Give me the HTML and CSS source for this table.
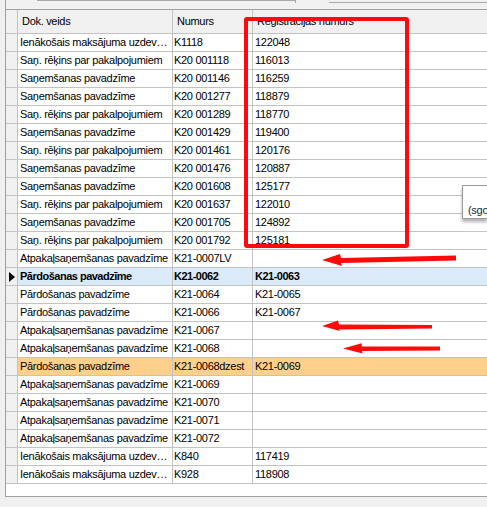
FILE: index.html
```html
<!DOCTYPE html>
<html lang="lv">
<head>
<meta charset="utf-8">
<title>Dokumenti</title>
<link rel="stylesheet" href="styles.css">
</head>
<body>
<div class="screen">
  <div class="topbar"><span class="seg seg-a"></span><span class="seg seg-b"></span></div>
  <div class="grid">
    <div class="row head">
      <div class="cell ind"></div>
      <div class="cell c1">Dok. veids</div>
      <div class="cell c2">Numurs<span class="sort"></span></div>
      <div class="cell c3">Registracijas numurs</div>
    </div>
    <div class="row"><div class="cell ind"></div><div class="cell c1">Ienākošais maksājuma uzdev…</div><div class="cell c2">K1118</div><div class="cell c3">122048</div></div>
    <div class="row"><div class="cell ind"></div><div class="cell c1">Saņ. rēķins par pakalpojumiem</div><div class="cell c2">K20 001118</div><div class="cell c3">116013</div></div>
    <div class="row"><div class="cell ind"></div><div class="cell c1">Saņemšanas pavadzīme</div><div class="cell c2">K20 001146</div><div class="cell c3">116259</div></div>
    <div class="row"><div class="cell ind"></div><div class="cell c1">Saņemšanas pavadzīme</div><div class="cell c2">K20 001277</div><div class="cell c3">118879</div></div>
    <div class="row"><div class="cell ind"></div><div class="cell c1">Saņ. rēķins par pakalpojumiem</div><div class="cell c2">K20 001289</div><div class="cell c3">118770</div></div>
    <div class="row"><div class="cell ind"></div><div class="cell c1">Saņemšanas pavadzīme</div><div class="cell c2">K20 001429</div><div class="cell c3">119400</div></div>
    <div class="row"><div class="cell ind"></div><div class="cell c1">Saņ. rēķins par pakalpojumiem</div><div class="cell c2">K20 001461</div><div class="cell c3">120176</div></div>
    <div class="row"><div class="cell ind"></div><div class="cell c1">Saņemšanas pavadzīme</div><div class="cell c2">K20 001476</div><div class="cell c3">120887</div></div>
    <div class="row"><div class="cell ind"></div><div class="cell c1">Saņemšanas pavadzīme</div><div class="cell c2">K20 001608</div><div class="cell c3">125177</div></div>
    <div class="row"><div class="cell ind"></div><div class="cell c1">Saņ. rēķins par pakalpojumiem</div><div class="cell c2">K20 001637</div><div class="cell c3">122010</div></div>
    <div class="row"><div class="cell ind"></div><div class="cell c1">Saņemšanas pavadzīme</div><div class="cell c2">K20 001705</div><div class="cell c3">124892</div></div>
    <div class="row"><div class="cell ind"></div><div class="cell c1">Saņ. rēķins par pakalpojumiem</div><div class="cell c2">K20 001792</div><div class="cell c3">125181</div></div>
    <div class="row"><div class="cell ind"></div><div class="cell c1">Atpakaļsaņemšanas pavadzīme</div><div class="cell c2">K21-0007LV</div><div class="cell c3"></div></div>
    <div class="row current"><div class="cell ind"><span class="pointer"></span></div><div class="cell c1">Pārdošanas pavadzīme</div><div class="cell c2">K21-0062</div><div class="cell c3">K21-0063</div></div>
    <div class="row"><div class="cell ind"></div><div class="cell c1">Pārdošanas pavadzīme</div><div class="cell c2">K21-0064</div><div class="cell c3">K21-0065</div></div>
    <div class="row"><div class="cell ind"></div><div class="cell c1">Pārdošanas pavadzīme</div><div class="cell c2">K21-0066</div><div class="cell c3">K21-0067</div></div>
    <div class="row"><div class="cell ind"></div><div class="cell c1">Atpakaļsaņemšanas pavadzīme</div><div class="cell c2">K21-0067</div><div class="cell c3"></div></div>
    <div class="row"><div class="cell ind"></div><div class="cell c1">Atpakaļsaņemšanas pavadzīme</div><div class="cell c2">K21-0068</div><div class="cell c3"></div></div>
    <div class="row marked"><div class="cell ind"></div><div class="cell c1">Pārdošanas pavadzīme</div><div class="cell c2">K21-0068dzest</div><div class="cell c3">K21-0069</div></div>
    <div class="row"><div class="cell ind"></div><div class="cell c1">Atpakaļsaņemšanas pavadzīme</div><div class="cell c2">K21-0069</div><div class="cell c3"></div></div>
    <div class="row"><div class="cell ind"></div><div class="cell c1">Atpakaļsaņemšanas pavadzīme</div><div class="cell c2">K21-0070</div><div class="cell c3"></div></div>
    <div class="row"><div class="cell ind"></div><div class="cell c1">Atpakaļsaņemšanas pavadzīme</div><div class="cell c2">K21-0071</div><div class="cell c3"></div></div>
    <div class="row"><div class="cell ind"></div><div class="cell c1">Atpakaļsaņemšanas pavadzīme</div><div class="cell c2">K21-0072</div><div class="cell c3"></div></div>
    <div class="row"><div class="cell ind"></div><div class="cell c1">Ienākošais maksājuma uzdev…</div><div class="cell c2">K840</div><div class="cell c3">117419</div></div>
    <div class="row"><div class="cell ind"></div><div class="cell c1">Ienākošais maksājuma uzdev…</div><div class="cell c2">K928</div><div class="cell c3">118908</div></div>
  </div>

  <div class="highlight-box"></div>

  <svg class="arrows" width="487" height="507" viewBox="0 0 487 507" aria-hidden="true">
    <g fill="#ff0a0a">
      <polygon points="322,260 340,254 341,258 456,255.5 456,260.5 341,263 342,266"/>
      <polygon points="322,326 338,320.5 339,324.5 432,325 432,328.5 339,329.5 340,331"/>
      <polygon points="343,348.5 361.5,343.3 362,346.5 440,346.5 440,350.5 362,351 362.5,353.5"/>
    </g>
  </svg>

  <div class="tooltip">(sgo</div>
</div>
</body>
</html>
```

FILE: styles.css
```css
html, body {
  margin: 0;
  padding: 0;
}

body {
  width: 487px;
  height: 507px;
  overflow: hidden;
  background: #f0f0f0;
  font-family: "Liberation Sans", Arial, sans-serif;
  font-size: 11px;
  letter-spacing: -0.3px;
  color: #000;
}

.screen {
  position: relative;
  width: 487px;
  height: 507px;
  overflow: hidden;
}

.topbar {
  display: flex;
  align-items: flex-start;
  height: 9px;
  margin-left: 5px;
  border-left: 1px solid #a0a0a0;
}

.seg-a {
  display: block;
  margin-left: 31px;
  width: 259px;
  height: 3px;
  box-sizing: border-box;
  border-top: 1px solid #a8a8a8;
  border-right: 1px solid #a8a8a8;
}

.seg-b {
  display: block;
  margin-left: 33px;
  flex: 1;
  height: 2px;
  border-bottom: 1px solid #a8a8a8;
}

.grid {
  margin-left: 5px;
  height: 486px;
  background: #fff;
  border-left: 1px solid #a0a0a0;
  border-top: 1px solid #a0a0a0;
  border-bottom: 1px solid #a0a0a0;
}

.row {
  display: flex;
  height: 18px;
}

.cell {
  box-sizing: border-box;
  height: 100%;
  line-height: 17px;
  padding-left: 2px;
  border-right: 1px solid #c3c3c3;
  border-bottom: 1px solid #c3c3c3;
  white-space: nowrap;
  overflow: hidden;
}

.ind {
  width: 12px;
  flex: none;
  padding: 0;
  background: #f0f0f0;
  display: flex;
  align-items: center;
  justify-content: center;
}

.c1 { width: 155px; flex: none; }
.c2 { width: 80px; flex: none; padding-left: 1px; }
.c3 { flex: 1; min-width: 0; border-right: none; }

.head {
  height: 24px;
}

.head .cell {
  background: #f0f0f0;
  line-height: 23px;
  padding-left: 4px;
}

.head .c2 {
  position: relative;
}

.sort {
  position: absolute;
  right: 4px;
  top: 11px;
  width: 0;
  height: 0;
  border-left: 2px solid transparent;
  border-right: 2px solid transparent;
  border-bottom: 3px solid #000;
}

.current .cell {
  background: #dbeaf8;
  font-weight: bold;
  letter-spacing: -0.5px;
}

.current .ind {
  background: #f0f0f0;
}

.pointer {
  width: 0;
  height: 0;
  border-top: 5.5px solid transparent;
  border-bottom: 5.5px solid transparent;
  border-left: 6px solid #000;
  margin-left: 1px;
}

.marked .cell {
  background: #ffcf8c;
}

.marked .ind {
  background: #f0f0f0;
}

.highlight-box {
  position: absolute;
  left: 244px;
  top: 17px;
  width: 165px;
  height: 231px;
  box-sizing: border-box;
  border: 4px solid #ff0a0a;
  border-radius: 3px;
}

.arrows {
  position: absolute;
  left: 0;
  top: 0;
  pointer-events: none;
}

.tooltip {
  position: absolute;
  left: 462px;
  top: 185px;
  width: 25px;
  height: 34px;
  box-sizing: border-box;
  padding: 17px 0 0 5px;
  background: #fff;
  border: 1px solid #9a9a9a;
  border-right: none;
  box-shadow: 0 3px 3px rgba(0, 0, 0, 0.3);
  color: #1c1c3c;
  line-height: 14px;
  white-space: nowrap;
  overflow: hidden;
}
```
